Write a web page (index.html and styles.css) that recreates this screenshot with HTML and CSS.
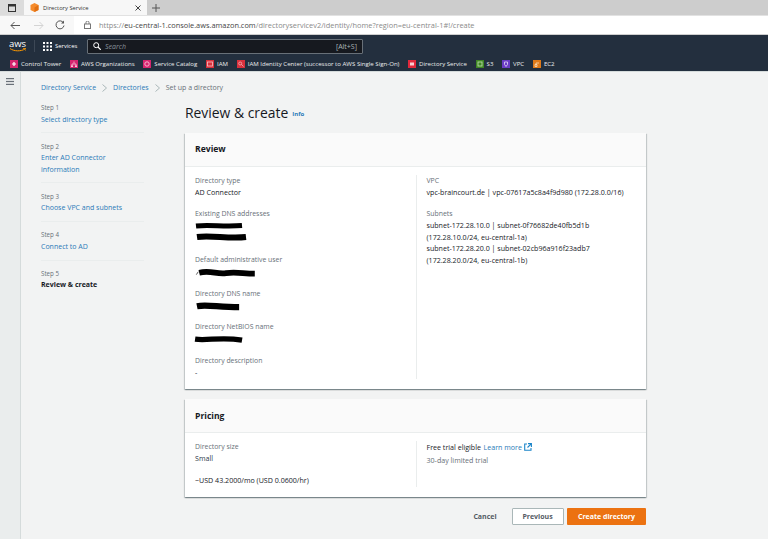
FILE: index.html
```html
<!DOCTYPE html>
<html lang="en">
<head>
<meta charset="utf-8">
<title>Directory Service</title>
<link rel="stylesheet" href="styles.css">
</head>
<body>
<div class="tabstrip">
  <div class="winbtn"><svg width="8" height="8" viewBox="0 0 8 8"><rect x=".5" y=".5" width="7" height="7" fill="none" stroke="#333"/><rect x="1" y="1" width="6" height="1.5" fill="#333"/></svg></div>
  <div class="tab">
    <svg class="favicon" width="9" height="9" viewBox="0 0 9 9"><path d="M4.500 0 8.500 2v5l-4 2-4-2V2z" fill="#f58a2a"/><path d="M4.500 4.500V9l4-2V2z" fill="#e06f12"/></svg>
    <span class="tabtitle">Directory Service</span>
    <svg class="tabclose" width="6" height="6" viewBox="0 0 6 6"><path d="M.5.5l5 5M5.500.5l-5 5" stroke="#444" stroke-width="1"/></svg>
  </div>
  <svg class="newtab" width="8" height="8" viewBox="0 0 8 8"><path d="M4 0v8M0 4h8" stroke="#555" stroke-width="1"/></svg>
</div>
<div class="toolbar">
  <svg class="back" width="10" height="9" viewBox="0 0 10 9"><path d="M10 4.500H1M4.500 1 1 4.500 4.500 8" fill="none" stroke="#555" stroke-width="1"/></svg>
  <svg class="fwd" width="10" height="9" viewBox="0 0 10 9"><path d="M0 4.500h9M5.500 1 9 4.500 5.500 8" fill="none" stroke="#d4d4d4" stroke-width="1"/></svg>
  <svg class="reload" width="10" height="10" viewBox="0 0 10 10"><path d="M8.600 3A4 4 0 1 0 9 5.500" fill="none" stroke="#555" stroke-width="1"/><path d="M9 .5v3H6z" fill="#555"/></svg>
  <div class="urlbar">
    <svg class="lock" width="7" height="8" viewBox="0 0 7 8"><rect x=".5" y="3" width="6" height="4.500" fill="none" stroke="#777"/><path d="M2 3V1.500a1.500 1.500 0 0 1 3 0V3" fill="none" stroke="#777"/></svg>
    <span class="url"><span class="urlsoft">https://</span><span class="urlhost">eu-central-1.console.aws.amazon.com</span><span class="urlsoft">/directoryservicev2/identity/home?region=eu-central-1#!/create</span></span>
  </div>
</div>
<header class="nav">
  <div class="navtop">
    <div class="awslogo"><span class="awstext">aws</span><svg width="16" height="4" viewBox="0 0 16 4"><path d="M0 .5C4 3.500 11 3.500 15 1" fill="none" stroke="#f90" stroke-width="1"/><path d="M13 .5h3v2.500" fill="none" stroke="#f90" stroke-width=".8"/></svg></div>
    <div class="navsep"></div>
    <svg class="grid" width="9" height="9" viewBox="0 0 9 9" fill="#fff"><rect width="2" height="2"/><rect x="3.500" width="2" height="2"/><rect x="7" width="2" height="2"/><rect y="3.500" width="2" height="2"/><rect x="3.500" y="3.500" width="2" height="2"/><rect x="7" y="3.500" width="2" height="2"/><rect y="7" width="2" height="2"/><rect x="3.500" y="7" width="2" height="2"/><rect x="7" y="7" width="2" height="2"/></svg>
    <span class="services">Services</span>
    <div class="search">
      <svg width="8" height="8" viewBox="0 0 8 8"><circle cx="3.200" cy="3.200" r="2.500" fill="none" stroke="#fff"/><path d="M5 5l2.800 2.800" stroke="#fff" stroke-width="1.200"/></svg>
      <span class="searchtext">Search</span>
      <span class="shortcut">[Alt+S]</span>
    </div>
  </div>
  <div class="bookmarks">
    <span class="bm"><svg width="8" height="8" viewBox="0 0 8 8"><rect width="8" height="8" fill="#d6246e"/><path d="M4 2v4M2 4h4" stroke="#fff" stroke-width="1.200"/></svg>Control Tower</span>
    <span class="bm"><svg width="8" height="8" viewBox="0 0 8 8"><rect width="8" height="8" fill="#d6246e"/><path d="M4 1.500v2M2 6V4h4v2" fill="none" stroke="#f7c3d8" stroke-width=".8"/><rect x="1" y="5.500" width="2" height="1.500" fill="#f7c3d8"/><rect x="5" y="5.500" width="2" height="1.500" fill="#f7c3d8"/></svg>AWS Organizations</span>
    <span class="bm"><svg width="8" height="8" viewBox="0 0 8 8"><rect width="8" height="8" fill="#d6246e"/><circle cx="4" cy="4" r="2.200" fill="none" stroke="#f7c3d8" stroke-width=".9"/></svg>Service Catalog</span>
    <span class="bm"><svg width="8" height="8" viewBox="0 0 8 8"><rect width="8" height="8" fill="#d8303c"/><rect x="1.500" y="2" width="5" height="4" fill="none" stroke="#f6c2c6" stroke-width=".8"/></svg>IAM</span>
    <span class="bm"><svg width="8" height="8" viewBox="0 0 8 8"><rect width="8" height="8" fill="#d8303c"/><circle cx="3.200" cy="3.500" r="1.500" fill="none" stroke="#f6c2c6" stroke-width=".7"/><path d="M4.500 4.500l2 2" stroke="#f6c2c6" stroke-width=".7"/></svg>IAM Identity Center (successor to AWS Single Sign-On)</span>
    <span class="bm"><svg width="8" height="8" viewBox="0 0 8 8"><rect width="8" height="8" fill="#e0283c"/><rect x="2" y="2.500" width="4" height="3" fill="#f9cdd2"/></svg>Directory Service</span>
    <span class="bm"><svg width="8" height="8" viewBox="0 0 8 8"><rect width="8" height="8" fill="#3f8624"/><rect x="2" y="2" width="4" height="4" fill="none" stroke="#b8dca8" stroke-width=".9"/></svg>S3</span>
    <span class="bm"><svg width="8" height="8" viewBox="0 0 8 8"><rect width="8" height="8" fill="#693cc5"/><path d="M2.500 2h3v2.500L4 6.500 2.500 4.500z" fill="none" stroke="#d8c8f4" stroke-width=".9"/></svg>VPC</span>
    <span class="bm"><svg width="8" height="8" viewBox="0 0 8 8"><rect width="8" height="8" fill="#e07a1a"/><path d="M3 5.500V3h3M2 6.500V4.500h2v2z" fill="none" stroke="#fbdcb6" stroke-width=".8"/></svg>EC2</span>
  </div>
</header>
<div class="app">
  <aside class="rail"><svg width="8" height="7" viewBox="0 0 8 7" fill="#687078"><rect width="8" height="1.200"/><rect y="2.900" width="8" height="1.200"/><rect y="5.800" width="8" height="1.200"/></svg></aside>
  <main class="main">
    <nav class="crumbs">
      <a>Directory Service</a>
      <svg width="5" height="8" viewBox="0 0 5 8"><path d="M.5.5 4.500 4 .5 7.500" fill="none" stroke="#aab7b8"/></svg>
      <a>Directories</a>
      <svg width="5" height="8" viewBox="0 0 5 8"><path d="M.5.5 4.500 4 .5 7.500" fill="none" stroke="#aab7b8"/></svg>
      <span class="crumbcur">Set up a directory</span>
    </nav>
    <div class="wizard">
      <ol class="steps">
        <li class="step"><small>Step 1</small><a>Select directory type</a></li>
        <li class="step"><small>Step 2</small><a>Enter AD Connector<br>information</a></li>
        <li class="step"><small>Step 3</small><a>Choose VPC and subnets</a></li>
        <li class="step"><small>Step 4</small><a>Connect to AD</a></li>
        <li class="step last"><small>Step 5</small><b>Review &amp; create</b></li>
      </ol>
      <div class="content">
        <div class="pagehead"><h1>Review &amp; create</h1><a class="info">Info</a></div>
        <section class="card">
          <h2>Review</h2>
          <div class="cols review">
            <div class="col">
              <div class="kv"><label>Directory type</label><div>AD Connector</div></div>
              <div class="kv"><label>Existing DNS addresses</label>
                <svg class="scrib" width="56" height="23" viewBox="0 -1 56 23"><path d="M1 5C14 3.500 30 6 47 4.500" fill="none" stroke="#000" stroke-width="5"/><path d="M2 16c14-2 32 2 49 0" fill="none" stroke="#000" stroke-width="6"/></svg>
              </div>
              <div class="kv"><label>Default administrative user</label>
                <svg class="scrib sm" width="64" height="12" viewBox="0 -1 64 12"><path d="M0 8l2-3" stroke="#555" fill="none"/><path d="M3 6c12-3 18 2 28 .5s18 .5 30 .5" fill="none" stroke="#000" stroke-width="6"/></svg>
              </div>
              <div class="kv"><label>Directory DNS name</label>
                <svg class="scrib sm" width="48" height="12" viewBox="0 -.5 48 12"><path d="M1 6c10-2 22 1 44 1" fill="none" stroke="#000" stroke-width="6.500"/></svg>
              </div>
              <div class="kv"><label>Directory NetBIOS name</label>
                <svg class="scrib sm shift" width="52" height="12" viewBox="0 -1 52 12"><path d="M0 5.500c14 2 26-3 49 1" fill="none" stroke="#000" stroke-width="5.500"/></svg>
              </div>
              <div class="kv"><label>Directory description</label><div>-</div></div>
            </div>
            <div class="col right">
              <div class="kv"><label>VPC</label><div>vpc-braincourt.de | vpc-07617a5c8a4f9d980 (172.28.0.0/16)</div></div>
              <div class="kv"><label>Subnets</label><div>subnet-172.28.10.0 | subnet-0f76682de40fb5d1b<br>(172.28.10.0/24, eu-central-1a)<br>subnet-172.28.20.0 | subnet-02cb96a916f23adb7<br>(172.28.20.0/24, eu-central-1b)</div></div>
            </div>
          </div>
        </section>
        <section class="card pricing">
          <h2>Pricing</h2>
          <div class="cols pricecols">
            <div class="col">
              <div class="kv"><label>Directory size</label><div class="small">Small</div></div>
              <div class="kv price"><div>~USD 43.2000/mo (USD 0.0600/hr)</div></div>
            </div>
            <div class="col right">
              <div class="free"><span>Free trial eligible</span><a>Learn more</a>
                <svg width="8" height="8" viewBox="0 0 8 8"><path d="M3 1H.7v6.300H7V5" fill="none" stroke="#1b85c9" stroke-width="1.100"/><path d="M4 .6h3.400V4M7.200.8 3.500 4.500" fill="none" stroke="#1b85c9" stroke-width="1.100"/></svg>
              </div>
              <div class="muted">30-day limited trial</div>
            </div>
          </div>
        </section>
        <div class="actions">
          <button class="btn link">Cancel</button>
          <button class="btn normal">Previous</button>
          <button class="btn primary">Create directory</button>
        </div>
      </div>
    </div>
  </main>
</div>
</body>
</html>
```
FILE: styles.css
```css
* { box-sizing: border-box; }
html, body { margin: 0; height: 100%; overflow: hidden; }
body { width: 768px; height: 539px; background: #f2f3f3; font-family: "Open Sans", sans-serif; font-size: 7.1px; color: #16191f; display: flex; flex-direction: column; }
svg { display: block; flex: none; }
a { color: #2a7ab8; }

.tabstrip { height: 15px; background: #cdcdcd; display: flex; align-items: stretch; }
.winbtn { width: 24px; background: #dcdcdc; display: flex; align-items: center; justify-content: center; }
.tab { width: 123px; background: #f7f7f7; display: flex; align-items: center; padding: 0 6px; }
.favicon { margin-right: 4px; }
.tabtitle { flex: 1; font-size: 5.800px; color: #333; }
.newtab { margin: 4px 0 0 5px; }

.toolbar { height: 20px; background: #f8f8f8; border-top: 1px solid #e2e2e2; border-bottom: 1px solid #cfcfcf; display: flex; align-items: center; padding-left: 10px; }
.fwd { margin-left: 14px; }
.reload { margin-left: 11px; }
.urlbar { margin-left: 9px; flex: 1; display: flex; align-items: center; gap: 8px; padding-left: 10px; height: 18px; background: #fff; }
.url { font-size: 7.400px; white-space: nowrap; }
.urlsoft { color: #8a8a8a; }
.urlhost { color: #444; }

.nav { background: #232f3e; color: #fff; height: 36px; }
.navtop { height: 22px; display: flex; align-items: center; padding-left: 9px; }
.awslogo { width: 17px; display: flex; flex-direction: column; align-items: center; font-size: 9.500px; line-height: 8px; }
.awstext { display: block; height: 8px; }
.navsep { width: 1px; height: 12px; background: #3d4856; margin: 0 8px; }
.grid { margin-right: 3px; }
.services { font-size: 5.900px; width: 32px; }
.search { width: 276px; height: 15px; background: #16191f; border: 1px solid #687078; display: flex; align-items: center; padding: 0 5px; border-radius: 1px; }
.searchtext { margin-left: 4px; flex: 1; color: #8a939c; font-style: italic; font-size: 7px; }
.shortcut { color: #aab7b8; font-size: 7px; }

.bookmarks { height: 14px; display: flex; align-items: center; padding-left: 10px; gap: 8.700px; font-size: 6.080px; white-space: nowrap; color: #eaeded; }
.bm { display: flex; align-items: center; gap: 3px; }

.app { flex: 1; display: flex; min-height: 0; border-top: 1px solid #d5dbdb; }
.rail { width: 21px; background: #eaeded; border-right: 1px solid #d5dbdb; padding: 6px 0 0 6px; }
.main { flex: 1; padding: 11px 0 0 20px; min-width: 0; }
.crumbs { display: flex; align-items: center; height: 9px; gap: 6px; font-size: 7px; white-space: nowrap; }
.crumbcur { color: #687078; }

.wizard { display: flex; }
.steps { list-style: none; margin: 10px 0 0; padding: 0; width: 103px; flex: none; }
.step { border-bottom: 1px solid #eaeded; padding-bottom: 7.300px; margin-bottom: 7.300px; line-height: 11.500px; font-size: 7px; }
.step.last { border: 0; }
.step small { display: block; font-size: 6.200px; color: #687078; }
.step a, .step b { display: block; }
.step b { font-weight: 700; color: #16191f; }

.content { width: 461px; margin-left: 41px; }
.pagehead { height: 40.500px; display: flex; align-items: center; gap: 4px; }
h1 { font-size: 13.900px; font-weight: 400; margin: 0; color: #16191f; }
.info { font-size: 6px; font-weight: 700; margin-top: 4px; }

.card { background: #fff; box-shadow: 0 1px 1px rgba(0,28,36,.3), 1px 1px 1px rgba(0,28,36,.15), -1px 1px 1px rgba(0,28,36,.15); }
.card h2 { margin: 0; height: 34px; background: #fafafa; padding: 0 10px; font-size: 8.600px; font-weight: 700; display: flex; align-items: center; border-bottom: 1px solid #eaeded; }
.cols { display: grid; grid-template-columns: 1fr 1fr; padding: 8px 0 10px; }
.col { padding-left: 10px; min-width: 0; }
.col.right { border-left: 1px solid #eaeded; }
.review .col { min-height: 204px; }
.pricecols .col { min-height: 46px; }
.kv { line-height: 11.400px; margin-bottom: 10.400px; }
.kv label { display: block; color: #687078; font-size: 6.900px; line-height: 12px; }
.kv:last-child { margin-bottom: 0; }
.scrib.sm { height: 11.500px; }
.shift { margin-left: -1px; }
.pricing { margin-top: 10.500px; }
.small { color: #2d3a4e; }
.price { margin-top: 1px; }
.free { display: flex; gap: 2.500px; align-items: baseline; line-height: 12px; }
.free svg { align-self: center; }
.muted { color: #687078; margin-top: 2px; line-height: 11.400px; }

.actions { display: flex; justify-content: flex-end; align-items: center; margin-top: 11px; gap: 3.500px; }
.btn { height: 16.500px; font-family: inherit; font-size: 7px; font-weight: 700; border-radius: 1px; padding: 0; }
.link { background: none; border: 0; color: #545b64; width: 41px; margin-right: 2.500px; }
.normal { background: #fff; border: 1px solid #aab7b8; color: #545b64; width: 52px; }
.primary { background: #ec7211; border: 0; color: #fff; width: 79px; }
```
